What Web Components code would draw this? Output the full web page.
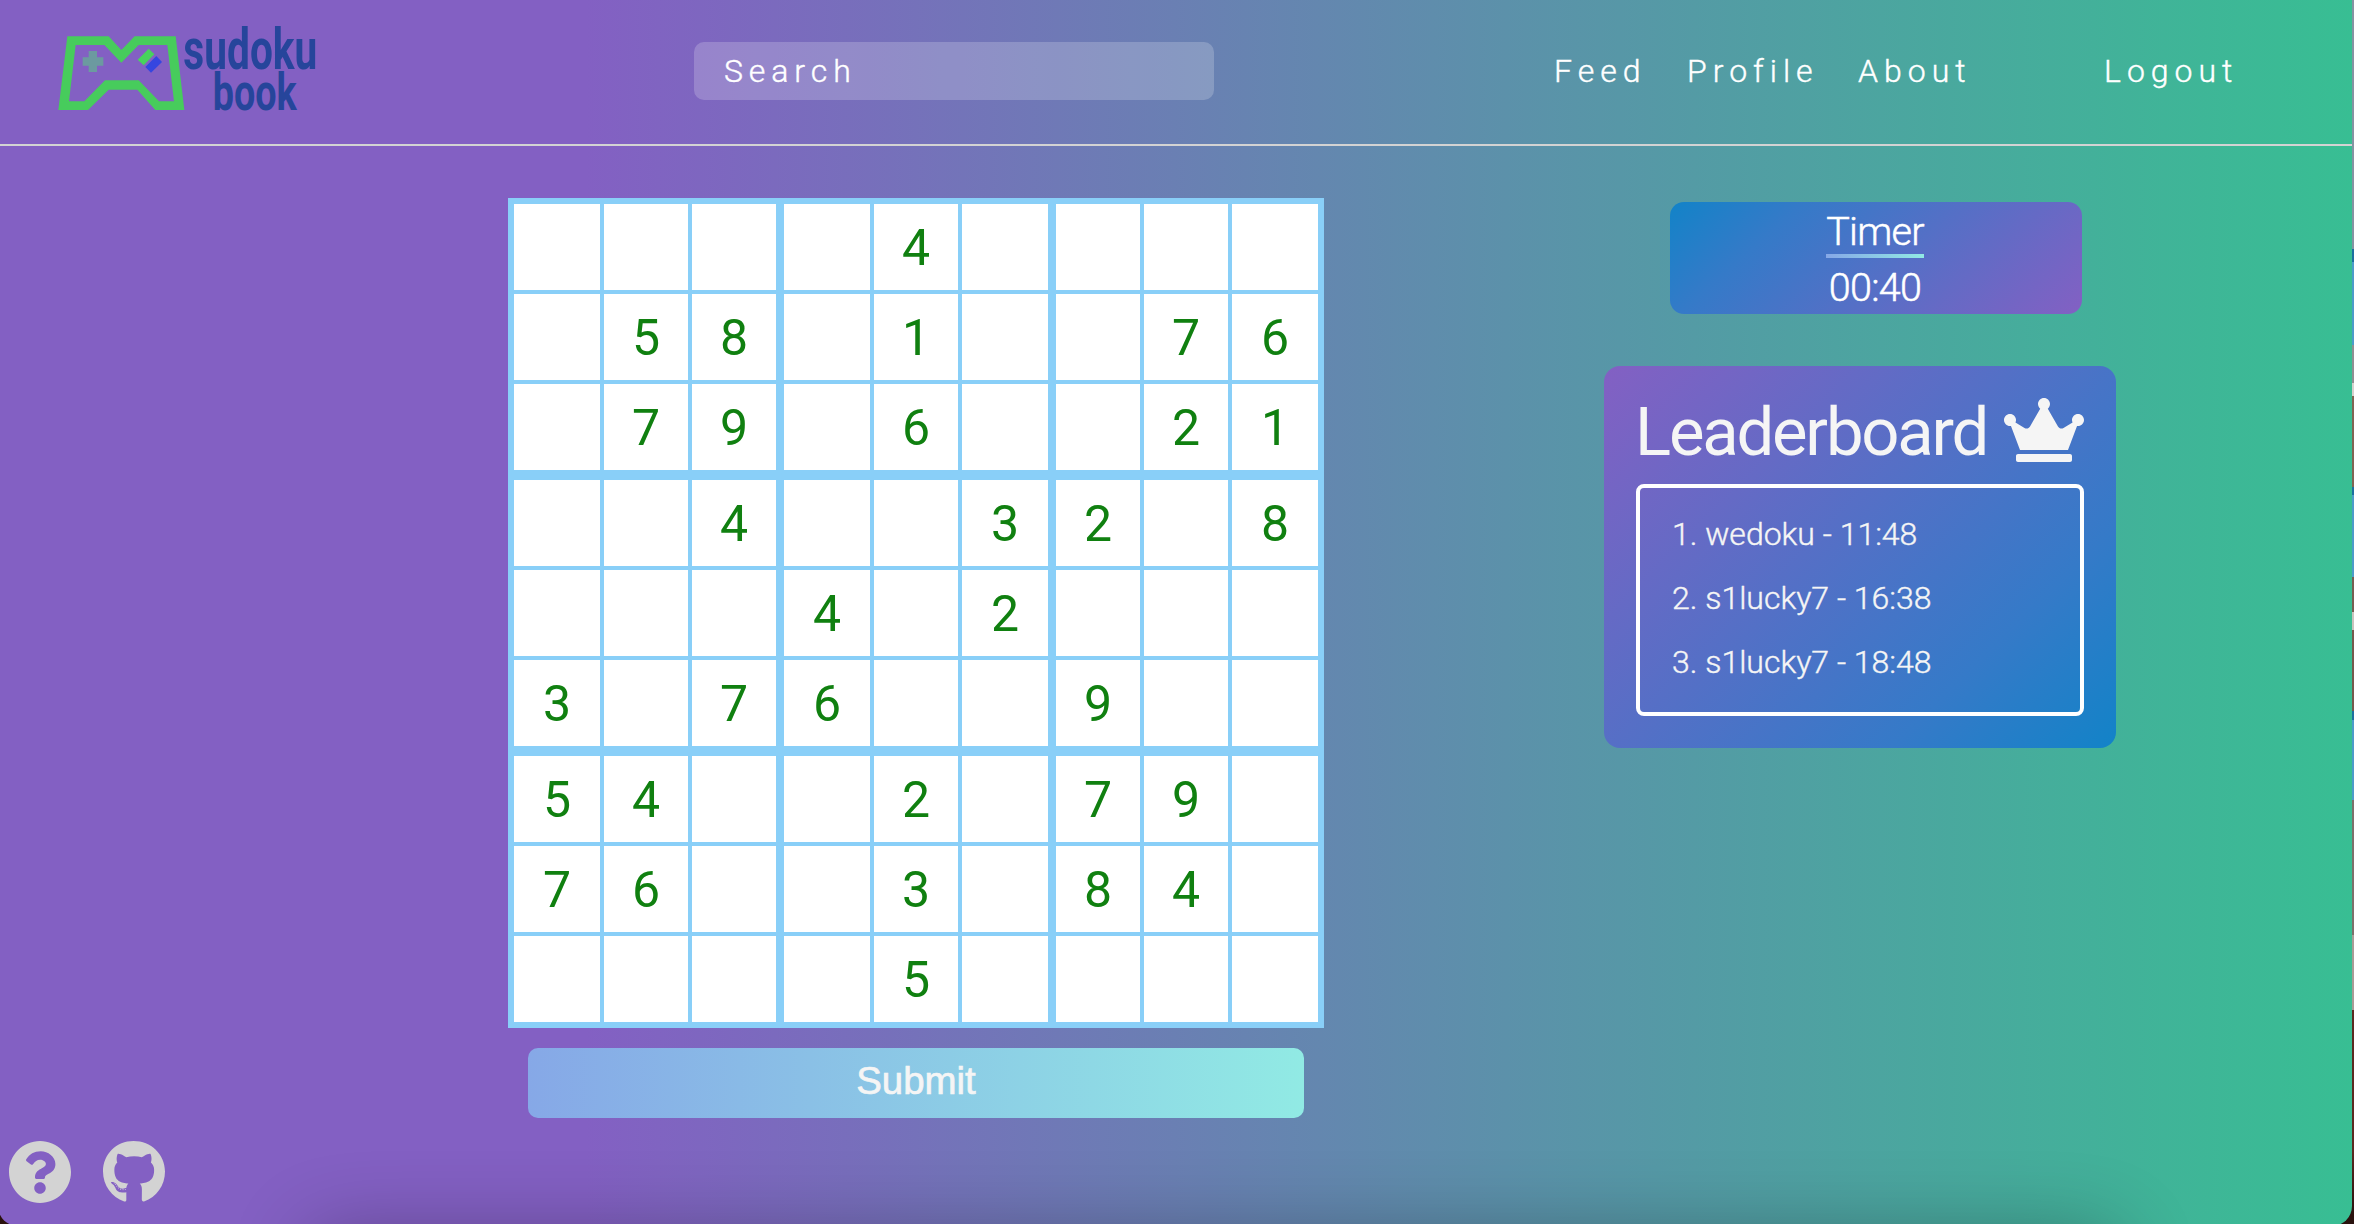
<!DOCTYPE html>
<html lang="en">
<head>
<meta charset="utf-8">
<title>Sudoku Book</title>
<style>
html,body{margin:0;height:100%;overflow:hidden}
body{font-family:Roboto,"Liberation Sans",sans-serif;font-weight:300;color:#fff;background:#2a1a14}
</style>
</head>
<body>
<sudoku-app></sudoku-app>
<script>
function define(name, html, setup) {
  customElements.define(name, class extends HTMLElement {
    constructor() {
      super();
      this.attachShadow({mode: 'open'});
    }
    connectedCallback() {
      this.shadowRoot.innerHTML = html;
      if (setup) setup(this, this.shadowRoot);
    }
  });
}

define('site-logo', `
<style>:host{display:block;width:300px;height:120px}svg{display:block;overflow:visible}
text{font-family:Roboto,"Liberation Sans",sans-serif;font-weight:700;fill:#26459b}</style>
<svg width="300" height="120" viewBox="0 0 900 360">
<path fill="#47cc5c" fill-rule="evenodd" d="M82 79H206L244 120L284 79H407L433 300H346L292 239H206L144 300H55ZM107 105L87 274H133L195 211H296L357 274H402L382 105H296L244 158L193 105Z"/>
<path fill="#6c9aa0" d="M146 123h25v19h19v25h-19v19h-25v-19h-18v-25h18z"/>
<path fill="#47d35c" d="M326 116L343 133L311 166L293 149Z"/>
<path fill="#3546e0" d="M349 138L366 156L333 188L316 171Z"/>
<text x="430" y="178" font-size="171" textLength="402" lengthAdjust="spacingAndGlyphs">sudoku</text>
<text x="518" y="300" font-size="155" textLength="252" lengthAdjust="spacingAndGlyphs">book</text>
</svg>`);

define('search-box', `
<style>:host{display:flex;align-items:center;box-sizing:border-box;width:520px;height:58px;padding:0 0 0 30px;border-radius:10px;background:rgba(255,255,255,.2);font-size:32px;letter-spacing:5.9px;-webkit-text-stroke:.4px #fff}</style>
<span><slot></slot></span>`);

define('nav-link', `
<style>:host{display:block;font-size:32px;letter-spacing:6px;line-height:38px;white-space:nowrap;-webkit-text-stroke:.4px #fff}</style>
<slot></slot>`);

define('site-header', `
<style>:host{display:flex;align-items:flex-start;box-sizing:border-box;height:146px;padding-left:40px;border-bottom:2px solid #d3d3d3}
site-logo{margin-top:10px}search-box{margin:42px 0 0 354px}
nav{display:flex;margin:52px 0 0 340px}
nav-link.feed{width:133px}nav-link.profile{width:171px}nav-link.about{width:246px}</style>
<site-logo></site-logo><search-box>Search</search-box>
<nav><nav-link class="feed">Feed</nav-link><nav-link class="profile">Profile</nav-link><nav-link class="about">About</nav-link><nav-link>Logout</nav-link></nav>`);

define('sudoku-board', `
<style>:host{display:grid;box-sizing:border-box;width:816px;height:830px;border:6px solid #89cff8;background:#89cff8;
grid-template-columns:86px 4px 84px 4px 84px 8px 86px 4px 84px 4px 86px 8px 84px 4px 84px 4px 86px;
grid-template-rows:86px 4px 86px 4px 86px 10px 86px 4px 86px 4px 86px 10px 86px 4px 86px 4px 86px}
div{display:flex;align-items:center;justify-content:center;box-sizing:border-box;padding-top:2px;background:#fff;color:#108010;font-size:50px;font-weight:400;line-height:1}</style>`,
(host, root) => {
  host.getAttribute('puzzle').split('/').forEach((row, r) => [...row].forEach((v, c) => {
    const cell = document.createElement('div');
    cell.style.gridArea = `${r * 2 + 1} / ${c * 2 + 1}`;
    if (v !== '.') cell.textContent = v;
    root.append(cell);
  }));
});

define('submit-button', `
<style>:host{display:flex;align-items:center;justify-content:center;width:776px;height:70px;border-radius:10px;background:linear-gradient(to right,#86a8e7,#91eae4);color:#f5f5f5;font:400 38.4px/44px "Liberation Sans",Arial,sans-serif;-webkit-text-stroke:.7px #f5f5f5}
span{margin-bottom:4px}</style><span><slot></slot></span>`);

define('game-timer', `
<style>:host{display:flex;flex-direction:column;align-items:center;box-sizing:border-box;width:412px;height:112px;padding:7px 2px 0 0;border-radius:14px;background:linear-gradient(138deg,#1283c8,#357ac8 25%,#8360c3);font-size:39.5px;line-height:45px;letter-spacing:-.7px;-webkit-text-stroke:.5px #fff}
i{display:block;width:98px;height:4px;background:linear-gradient(to right,#86a8e7,#91eae4)}
.value{margin-top:7px}</style>
<span><slot name="label"></slot></span><i></i><span class="value"><slot name="value"></slot></span>`);

define('leader-board', `
<style>:host{display:block;box-sizing:border-box;width:512px;height:382px;padding:32px;border-radius:16px;background:linear-gradient(135deg,#8360c3,#357ac8 75%,#1283c8);color:#f5f5f5}
header{display:flex;justify-content:space-between;height:86px}
h2{margin:-6px 0 0 -1px;font-size:67px;line-height:80px;font-weight:400;letter-spacing:-2.2px;white-space:nowrap}
svg{display:block;width:80px;height:64px;fill:#f5f5f5}
ol{list-style:none;margin:0;box-sizing:border-box;height:232px;padding:14px 0 0 32px;border:4px solid #fff;border-radius:8px;font-size:32px;line-height:64px;-webkit-text-stroke:.4px #f5f5f5}</style>
<header><h2>Leaderboard</h2>
<svg viewBox="0 0 640 512"><path d="M528 448H112c-8.8 0-16 7.2-16 16v32c0 8.8 7.2 16 16 16h416c8.8 0 16-7.2 16-16v-32c0-8.8-7.2-16-16-16zm64-320c-26.5 0-48 21.5-48 48 0 7.1 1.6 13.7 4.4 19.8L476 239.2c-15.4 9.2-35.3 4-44.2-11.6L350.3 85C361 76.2 368 63 368 48c0-26.5-21.5-48-48-48s-48 21.5-48 48c0 15 7 28.2 17.7 37l-81.5 142.6c-8.9 15.6-28.9 20.8-44.2 11.6l-72.3-43.4c2.7-6 4.4-12.7 4.4-19.8 0-26.5-21.5-48-48-48S0 149.5 0 176s21.5 48 48 48c2.6 0 5.2-.4 7.7-.8L128 416h384l72.3-192.8c2.5.4 5.1.8 7.7.8 26.5 0 48-21.5 48-48s-21.5-48-48-48z"/></svg></header>
<ol><li>1. wedoku - 11:48</li><li>2. s1lucky7 - 16:38</li><li>3. s1lucky7 - 18:48</li></ol>`);

define('site-footer', `
<style>:host{display:flex;gap:31px;padding-left:8px;height:64px}svg{display:block;height:64px;fill:#d3d3d3}</style>
<svg width="64" viewBox="0 0 512 512"><path d="M504 256c0 136.997-111.043 248-248 248S8 392.997 8 256C8 119.083 119.043 8 256 8s248 111.083 248 248zM262.655 90c-54.497 0-89.255 22.957-116.549 63.758-3.536 5.286-2.353 12.415 2.715 16.258l34.699 26.31c5.205 3.947 12.621 3.008 16.665-2.122 17.864-22.658 30.113-35.797 57.303-35.797 20.429 0 45.698 13.148 45.698 32.958 0 14.976-12.363 22.667-32.534 33.976C247.128 238.528 216 254.941 216 296v4c0 6.627 5.373 12 12 12h56c6.627 0 12-5.373 12-12v-1.333c0-28.462 83.186-29.647 83.186-106.667 0-58.002-60.165-102-116.531-102zM256 338c-25.365 0-46 20.635-46 46 0 25.364 20.635 46 46 46s46-20.636 46-46c0-25.365-20.635-46-46-46z"/></svg>
<svg width="62" viewBox="0 0 496 512"><path d="M165.9 397.4c0 2-2.3 3.6-5.2 3.6-3.3.3-5.6-1.3-5.6-3.6 0-2 2.3-3.6 5.2-3.6 3-.3 5.6 1.3 5.6 3.6zm-31.1-4.5c-.7 2 1.3 4.3 4.3 4.9 2.6 1 5.6 0 6.2-2s-1.3-4.3-4.3-5.2c-2.6-.7-5.5.3-6.2 2.3zm44.2-1.7c-2.9.7-4.9 2.6-4.6 4.9.3 2 2.9 3.3 5.9 2.6 2.9-.7 4.9-2.6 4.6-4.6-.3-1.9-3-3.2-5.9-2.9zM244.8 8C106.1 8 0 113.3 0 252c0 110.9 69.8 205.8 169.5 239.2 12.8 2.3 17.3-5.6 17.3-12.1 0-6.2-.3-40.4-.3-61.4 0 0-70 15-84.7-29.8 0 0-11.4-29.1-27.8-36.6 0 0-22.9-15.7 1.6-15.4 0 0 24.9 2 38.6 25.8 21.9 38.6 58.6 27.5 72.9 20.9 2.3-16 8.8-27.1 16-33.7-55.9-6.2-112.3-14.3-112.3-110.5 0-27.5 7.6-41.3 23.6-58.9-2.6-6.5-11.1-33.3 2.6-67.9 20.9-6.5 69 27 69 27 20-5.6 41.5-8.5 62.8-8.5s42.8 2.9 62.8 8.5c0 0 48.1-33.6 69-27 13.7 34.7 5.2 61.4 2.6 67.9 16 17.7 25.8 31.5 25.8 58.9 0 96.5-58.9 104.2-114.8 110.5 9.2 7.9 17 22.9 17 46.4 0 33.7-.3 75.4-.3 83.6 0 6.5 4.6 14.4 17.3 12.1C428.2 457.8 496 362.9 496 252 496 113.3 383.5 8 244.8 8zM97.2 352.9c-1.3 1-1 3.3.7 5.2 1.6 1.6 3.9 2.3 5.2 1 1.3-1 1-3.3-.7-5.2-1.6-1.6-3.9-2.3-5.2-1zm-10.8-8.1c-.7 1.3.3 2.9 2.3 3.9 1.6 1 3.6.7 4.3-.7.7-1.3-.3-2.9-2.3-3.9-2-.6-3.6-.3-4.3.7zm32.4 35.6c-1.6 1.3-1 4.3 1.3 6.2 2.3 2.3 5.2 2.6 6.5 1 1.3-1.3.7-4.3-1.3-6.2-2.2-2.3-5.2-2.6-6.5-1zm-11.4-14.7c-1.6 1-1.6 3.6 0 5.9 1.6 2.3 4.3 3.3 5.6 2.3 1.6-1.3 1.6-3.9 0-6.2-1.4-2.3-4-3.3-5.6-2z"/></svg>`);

define('sudoku-app', `
<style>
:host{display:block;width:2354px;height:1224px;overflow:hidden;
background:linear-gradient(to bottom,#8493a2 0 249px,#1d6f9f 249px 262px,#4c9bc9 262px 345px,#8f8f92 345px 383px,#d5d0cc 383px 396px,#806452 396px 487px,#1d6f9f 487px 495px,#4c9bc9 495px 577px,#765e51 577px 612px,#c9c2bc 612px 630px,#75594c 630px 711px,#1d6f9f 711px 720px,#4c9bc9 720px 800px,#7c706a 800px 935px,#a89b95 935px 1010px,#5b2a20 1010px 1150px,#2a120e 1215px)}
.window{width:2354px;height:1226px;margin-left:-2px;box-sizing:border-box;padding-left:2px;border-radius:0 0 20px 20px;overflow:hidden;position:relative;
background:linear-gradient(to right,#8360c3 25%,#38be93 100%)}
.content{position:relative;z-index:1}
main{display:flex;height:994px;padding:52px 0 0 508px;box-sizing:border-box}
.play{display:flex;flex-direction:column;align-items:center;width:816px;gap:20px}
aside{display:flex;flex-direction:column;margin-left:280px;padding-top:4px;gap:52px}
game-timer{margin-left:66px}
.shade{position:absolute;left:312px;right:234px;top:1234px;height:80px;border-radius:20px;box-shadow:0 0 80px rgba(0,0,0,.3)}
</style>
<div class="window"><div class="shade"></div><div class="content">
<site-header></site-header>
<main>
<div class="play"><sudoku-board puzzle="....4..../.58.1..76/.79.6..21/..4..32.8/...4.2.../3.76..9../54..2.79./76..3.84./....5...."></sudoku-board><submit-button>Submit</submit-button></div>
<aside><game-timer><span slot="label">Timer</span><span slot="value">00:40</span></game-timer><leader-board></leader-board></aside>
</main>
<site-footer></site-footer>
</div></div>`);
</script>
</body>
</html>
